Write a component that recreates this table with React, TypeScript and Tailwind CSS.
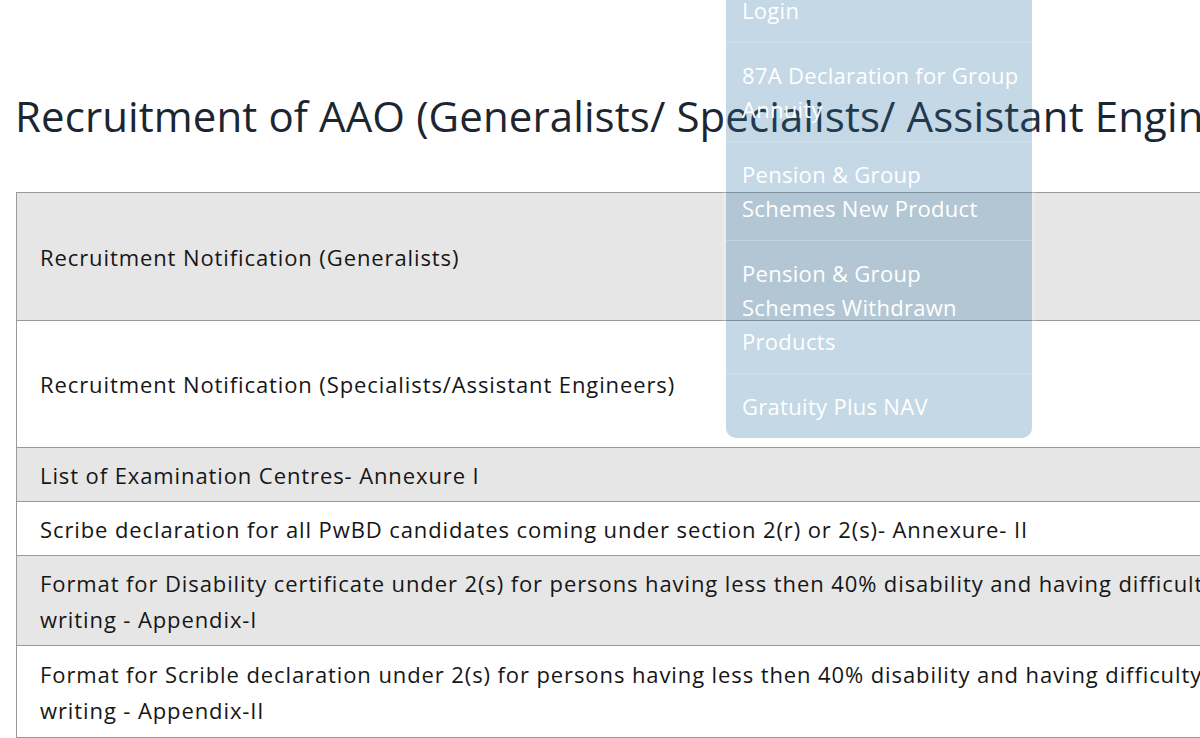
const rows = [
  { text: "Recruitment Notification (Generalists)", h: "h-[128px]", gray: true },
  { text: "Recruitment Notification (Specialists/Assistant Engineers)", h: "h-[127px]", gray: false },
  { text: "List of Examination Centres- Annexure I", h: "h-[54px]", gray: true },
  {
    text: "Scribe declaration for all PwBD candidates coming under section 2(r) or 2(s)- Annexure- II",
    h: "h-[54px]",
    gray: false,
  },
  {
    text: "Format for Disability certificate under 2(s) for persons having less then 40% disability and having difficulty in writing - Appendix-I",
    h: "h-[90px]",
    gray: true,
  },
  {
    text: "Format for Scrible declaration under 2(s) for persons having less then 40% disability and having difficulty in writing - Appendix-II",
    h: "h-[92px]",
    gray: false,
  },
];

const menuItems = [
  ["Login"],
  ["87A Declaration for Group", "Annuity"],
  ["Pension & Group", "Schemes New Product"],
  ["Pension & Group", "Schemes Withdrawn", "Products"],
  ["Gratuity Plus NAV"],
];

function DropdownMenu() {
  return (
    <div className="absolute left-[726px] top-[-22px] z-10 w-[306px] rounded-b-[10px] bg-[rgba(48,116,162,0.28)] shadow-[0_0_6px_rgba(255,255,255,0.6)]">
      <ul>
        {menuItems.map((lines, i) => (
          <li
            key={i}
            className={`px-4 py-[15px] text-[22px] leading-[34px] tracking-[0.3px] text-white ${
              i < menuItems.length - 1 ? "border-b border-[rgba(255,255,255,0.22)]" : ""
            }`}
          >
            {lines.map((line) => (
              <span key={line} className="block whitespace-nowrap">
                {line}
              </span>
            ))}
          </li>
        ))}
      </ul>
    </div>
  );
}

export default function App() {
  return (
    <div className="relative h-[738px] w-[1200px] overflow-hidden bg-white font-['Open_Sans','Liberation_Sans',sans-serif]">
      <DropdownMenu />
      <main className="w-[1700px] pl-[15px] pt-[92px]">
        <h1 className="whitespace-nowrap text-[42px] leading-[48px] tracking-[0.1px] text-[#1b2631]">
          Recruitment of AAO (Generalists/ Specialists/ Assistant Engineers) 2024
        </h1>
        <table className="mt-[52px] ml-px w-[1500px] border-collapse text-[22px] leading-[36px] tracking-[0.9px] text-[#161616]">
          <tbody>
            {rows.map((row) => (
              <tr key={row.text} className={`${row.h} ${row.gray ? "bg-[#e6e6e6]" : "bg-white"}`}>
                <td className="w-[1260px] border border-[#9a9a9a] px-[23px] align-middle">
                  <span className="block w-[1210px]">{row.text}</span>
                </td>
                <td className="border border-[#9a9a9a] px-4 align-middle" />
              </tr>
            ))}
          </tbody>
        </table>
      </main>
    </div>
  );
}
